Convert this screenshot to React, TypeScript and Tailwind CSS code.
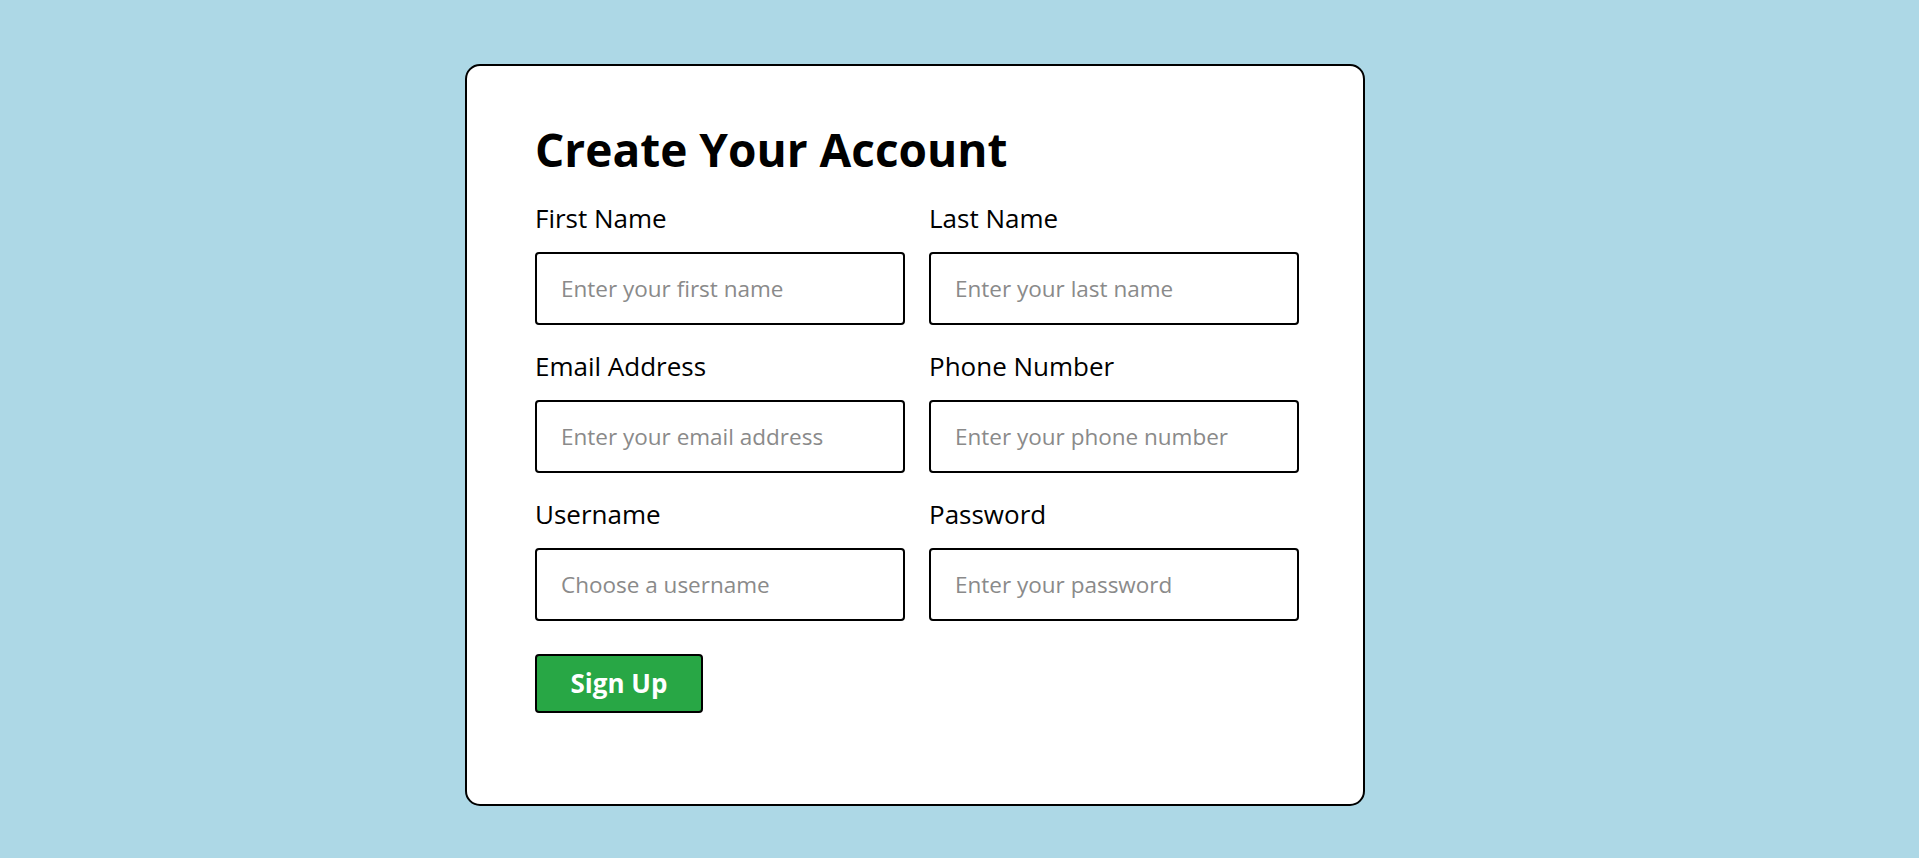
import React, { useState } from 'react';

type Field = {
  id: string;
  label: string;
  type: string;
  placeholder: string;
};

const fields: Field[] = [
  { id: 'firstName', label: 'First Name', type: 'text', placeholder: 'Enter your first name' },
  { id: 'lastName', label: 'Last Name', type: 'text', placeholder: 'Enter your last name' },
  { id: 'email', label: 'Email Address', type: 'email', placeholder: 'Enter your email address' },
  { id: 'phone', label: 'Phone Number', type: 'tel', placeholder: 'Enter your phone number' },
  { id: 'username', label: 'Username', type: 'text', placeholder: 'Choose a username' },
  { id: 'password', label: 'Password', type: 'password', placeholder: 'Enter your password' },
];

export default function App() {
  const [values, setValues] = useState<Record<string, string>>({});

  return (
    <div
      className="min-h-screen bg-[#add8e6] pt-[64px] pb-[52px]"
      style={{ fontFamily: '"Open Sans", "Noto Sans", sans-serif' }}
    >
      <form
        onSubmit={(e) => e.preventDefault()}
        className="ml-[465px] w-[900px] rounded-[15px] border-2 border-black bg-white pt-[53px] pr-[64px] pb-[91px] pl-[68px]"
      >
        {/* タイトル */}
        <h1 className="mb-[24px] text-[46px] leading-[60px] font-bold text-black">Create Your Account</h1>

        {/* 入力欄 */}
        <div className="grid grid-cols-2 gap-x-[24px] gap-y-[26px]">
          {fields.map((f) => (
            <div key={f.id} className="flex flex-col">
              <label htmlFor={f.id} className="mb-[19px] text-[26px] leading-[30px] text-black">
                {f.label}
              </label>
              <input
                id={f.id}
                type={f.type}
                placeholder={f.placeholder}
                value={values[f.id] ?? ''}
                onChange={(e) => setValues({ ...values, [f.id]: e.target.value })}
                className="h-[73px] w-full rounded-[4px] border-2 border-black px-[24px] text-[22.5px] text-black outline-none placeholder:text-[#8a8a8a]"
              />
            </div>
          ))}
        </div>

        <button
          type="submit"
          className="mt-[33px] flex h-[59px] w-[168px] items-center justify-center rounded-[4px] border-2 border-black bg-[#28a745] text-[26px] font-bold text-white"
        >
          Sign Up
        </button>
      </form>
    </div>
  );
}
